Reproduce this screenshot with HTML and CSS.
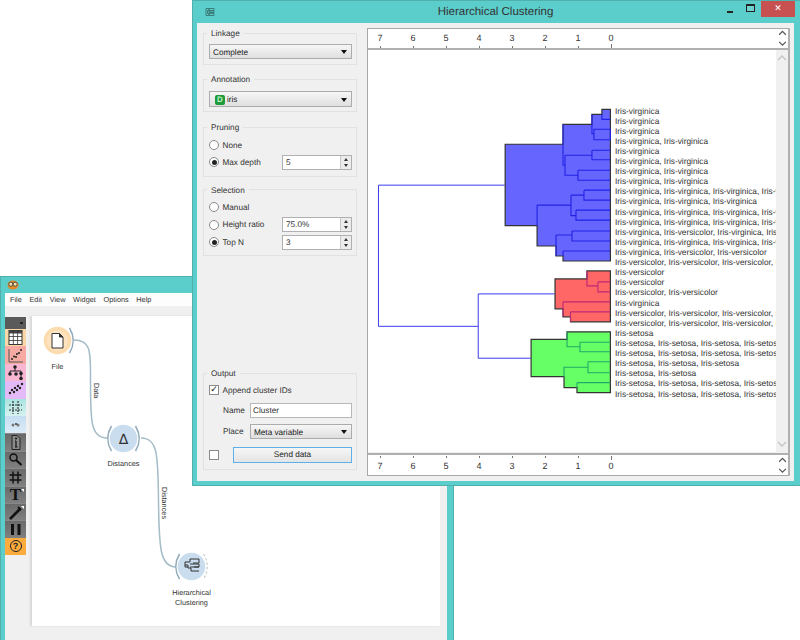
FILE: index.html
```html
<!DOCTYPE html>
<html lang="en">
<head>
<meta charset="utf-8">
<title>Hierarchical Clustering</title>
<link rel="stylesheet" href="styles.css">
</head>
<body>
<div class="desktop">

  <section class="window back">
    <header class="back-title">
      <svg class="owl" viewBox="0 0 12 10"><ellipse cx="6" cy="5" rx="5.5" ry="4.5" fill="#e08a2c"/><circle cx="3.8" cy="4.2" r="2" fill="#f6e2b0" stroke="#333" stroke-width=".8"/><circle cx="8.2" cy="4.2" r="2" fill="#f6e2b0" stroke="#333" stroke-width=".8"/></svg>
    </header>
    <nav class="menu"><span>File</span><span>Edit</span><span>View</span><span>Widget</span><span>Options</span><span>Help</span></nav>
    <div class="back-body">
      <div class="toolbox">
        <div class="tool tool-head"><i></i></div>
        <div class="tool c-orange"><svg viewBox="0 0 21 17"><rect x="4" y="1.5" width="13" height="14" fill="#fff" stroke="#333"/><rect x="4" y="1.5" width="13" height="3" fill="#444"/><path d="M8.3 1.5v14M12.6 1.5v14M4 7.5h13M4 11.5h13" stroke="#333" stroke-width=".8"/></svg></div>
        <div class="tool c-red"><svg viewBox="0 0 21 17"><path d="M4 2v13h14" fill="none" stroke="#555"/><g fill="#222"><circle cx="7" cy="12" r="1"/><circle cx="9" cy="9.500" r="1"/><circle cx="11" cy="10" r="1"/><circle cx="12" cy="7" r="1"/><circle cx="14" cy="6" r="1"/><circle cx="16" cy="3" r="1"/></g></svg></div>
        <div class="tool c-pink"><svg viewBox="0 0 21 17"><path d="M10 3v4M5 10V7h11v3M16 10v4" fill="none" stroke="#222"/><g fill="#222"><circle cx="10" cy="3" r="1.800"/><circle cx="5" cy="10" r="1.800"/><circle cx="11" cy="10" r="1.800"/><circle cx="16" cy="9.500" r="1.800"/><circle cx="16" cy="14.500" r="1.800"/></g></svg></div>
        <div class="tool c-purple"><svg viewBox="0 0 21 17"><g fill="#222"><circle cx="5" cy="12" r="1.200"/><circle cx="7" cy="9" r="1.200"/><circle cx="9" cy="11" r="1.200"/><circle cx="10" cy="7" r="1.200"/><circle cx="12" cy="9" r="1.200"/><circle cx="13" cy="5" r="1.200"/><circle cx="15" cy="7" r="1.200"/><circle cx="17" cy="3" r="1.200"/></g></svg></div>
        <div class="tool c-cyan"><svg viewBox="0 0 21 17"><path d="M8 2v13M13 2v13M4 6h13M4 11h13" stroke="#333" stroke-width="1.200" stroke-dasharray="2 1"/></svg></div>
        <div class="tool c-blue"><svg viewBox="0 0 21 17"><circle cx="8" cy="9" r="1.500" fill="#777"/><circle cx="13" cy="9" r="1.500" fill="#777"/><circle cx="11" cy="8" r="1" fill="#333"/></svg></div>
        <div class="tool c-gray"><svg viewBox="0 0 21 17"><path d="M7 1.500h5l3 3v11H7z" fill="#8a8a8a" stroke="#222"/><path d="M11 7v6M10 7h1M10 13h2.500" stroke="#111" stroke-width="1.200" fill="none"/><circle cx="11" cy="4.500" r="1" fill="#111"/></svg></div>
        <div class="tool c-gray"><svg viewBox="0 0 21 17"><circle cx="8.500" cy="6.500" r="3.500" fill="none" stroke="#111" stroke-width="1.500"/><path d="M11 9l5.500 5" stroke="#111" stroke-width="2.200"/></svg></div>
        <div class="tool c-gray"><svg viewBox="0 0 21 17"><path d="M8 2.500v12M13 2.500v12M4.500 6h12M4.500 11h12" stroke="#111" stroke-width="1.500"/></svg></div>
        <div class="tool c-gray"><span class="glyph-t">T</span><b class="corner"></b></div>
        <div class="tool c-gray"><svg viewBox="0 0 21 17"><path d="M5 15L15 5" stroke="#111" stroke-width="2.600"/><path d="M13 3l3 3" stroke="#111" stroke-width="2"/></svg><b class="corner"></b></div>
        <div class="tool c-gray"><svg viewBox="0 0 21 17"><path d="M7.500 3v11M14 3v11" stroke="#111" stroke-width="3"/></svg></div>
        <div class="tool c-help"><span class="glyph-q">?</span></div>
      </div>
      <svg class="canvas" viewBox="32 316 408 310">
        <g fill="none" stroke="#a3bcc8" stroke-width="1.500">
          <path d="M74 340C91 340 90.500 352 90.500 376C90.500 420 90 438 107 438"/>
          <path d="M141 438C158 438 158 456 158.500 500C159 548 160 567 176 567"/>
        </g>
        <text class="node-text" transform="translate(94 383) rotate(90)">Data</text>
        <text class="node-text" transform="translate(162 487) rotate(90)">Distances</text>

        <circle cx="57.500" cy="340.500" r="13.800" fill="#fcdcae"/>
        <circle cx="57.500" cy="340.500" r="10.500" fill="#fde3bf"/>
        <path d="M69.500 328Q77 340.500 69.500 353" fill="none" stroke="#90aaba" stroke-width="1.500"/>
        <path d="M52 333.500h7.500l3.500 3.500v11H52z" fill="#fff" stroke="#333"/>
        <path d="M59.500 333.500v3.500h3.500" fill="#333" stroke="#333"/>
        <text class="node-text" x="57.500" y="369" text-anchor="middle">File</text>

        <circle cx="123.500" cy="438.500" r="13.800" fill="#c9ddee"/>
        <path d="M111.500 426Q104 438.500 111.500 451M135.500 426Q143 438.500 135.500 451" fill="none" stroke="#90aaba" stroke-width="1.500"/>
        <text class="delta" x="123.500" y="443.500" text-anchor="middle">Δ</text>
        <text class="node-text" x="123.500" y="466" text-anchor="middle">Distances</text>

        <circle cx="191.500" cy="566.500" r="13.800" fill="#c9ddee"/>
        <path d="M179.500 554Q172 566.500 179.500 579" fill="none" stroke="#90aaba" stroke-width="1.500"/>
        <path d="M203.500 554Q211 566.500 203.500 579" fill="none" stroke="#c4c8cc" stroke-width="1.200" stroke-dasharray="2.500 2"/>
        <path d="M187 562h3v-3h9v4h-6M187 562h-2v5h3M185 565h3v3h3v3h8M190 564h9v3h-5M190 567h9" fill="none" stroke="#333"/>
        <text class="node-text" x="191.500" y="595" text-anchor="middle">Hierarchical</text>
        <text class="node-text" x="191.500" y="605" text-anchor="middle">Clustering</text>
      </svg>
    </div>
  </section>

  <section class="window front">
    <header class="front-title">
      <svg class="title-icon" viewBox="0 0 10 10"><path d="M1 1.500h3v2H2.500v3H4v2H1zM4 1.500h5v2H4zM4 4h5v1.500H4zM4 6.500h5v2H4z" fill="none" stroke="#3b7f7c"/></svg>
      <h1>Hierarchical Clustering</h1>
      <div class="controls">
        <span class="ctl-min"></span>
        <span class="ctl-max"></span>
        <span class="ctl-close">✕</span>
      </div>
    </header>
    <div class="front-body">
      <aside class="panel">
        <fieldset class="group g-linkage">
          <legend>Linkage</legend>
          <div class="combo"><span>Complete</span><i></i></div>
        </fieldset>
        <fieldset class="group g-annotation">
          <legend>Annotation</legend>
          <div class="combo combo-tall"><b class="disc">D</b><span>iris</span><i></i></div>
        </fieldset>
        <fieldset class="group g-pruning">
          <legend>Pruning</legend>
          <div class="rows">
            <div class="row"><span class="radio"></span><label>None</label></div>
            <div class="row"><span class="radio on"></span><label>Max depth</label><div class="spin"><span>5</span><i></i></div></div>
          </div>
        </fieldset>
        <fieldset class="group g-selection">
          <legend>Selection</legend>
          <div class="rows rows-wide">
            <div class="row"><span class="radio"></span><label>Manual</label></div>
            <div class="row"><span class="radio"></span><label>Height ratio</label><div class="spin"><span>75.0%</span><i></i></div></div>
            <div class="row"><span class="radio on"></span><label>Top N</label><div class="spin"><span>3</span><i></i></div></div>
          </div>
        </fieldset>
        <div class="spacer"></div>
        <fieldset class="group g-output">
          <legend>Output</legend>
          <div class="output-rows">
            <div class="row"><span class="check on">✓</span><label>Append cluster IDs</label></div>
            <div class="row field"><label>Name</label><div class="input">Cluster</div></div>
            <div class="row field"><label>Place</label><div class="combo"><span>Meta variable</span><i></i></div></div>
            <div class="row send"><span class="check"></span><button class="btn">Send data</button></div>
          </div>
        </fieldset>
      </aside>

      <main class="plot">
        <div class="axis axis-top">
          <svg class="axis-svg" viewBox="368 29 408 19">
            <g class="axis-nums" text-anchor="middle"><text x="380" y="41">7</text><text x="413" y="41">6</text><text x="446" y="41">5</text><text x="479" y="41">4</text><text x="512" y="41">3</text><text x="545" y="41">2</text><text x="578" y="41">1</text><text x="611" y="41">0</text></g>
            <path d="M380.500 46v2M413.500 46v2M446.500 46v2M479.500 46v2M512.500 46v2M545.500 46v2M578.500 46v2M611.500 44v4" stroke="#777"/>
          </svg>
          <div class="chev"><svg viewBox="0 0 11 20"><path d="M2 6l3.500-3.500L9 6M2 13.500l3.500 3.500L9 13.500" fill="none" stroke="#555" stroke-width="1.300"/></svg></div>
        </div>
        <div class="view">
          <svg class="dendro" viewBox="368 50 247 403" preserveAspectRatio="xMinYMin meet">
            <g fill="none" stroke="#3a3af0">
              <path d="M478.500 327H378.500V185.500H505"/>
              <path d="M555 294.500H478.500V359H531"/>
            </g>
            <path d="M505.500 144.500H563.500V124.500H592.500V114.500H602.500V109.500H611V261.500H563.500V256.500H556.500V246.500H537.500V226H505.500Z" fill="#6666ff" stroke="#333" stroke-width="1.200"/>
            <g fill="none" stroke="#2222e6" stroke-width="1.100">
              <path d="M602.500 114.500V119.500H611M592.500 114.500V134H594.500M594.500 129.500H611V140H594.500ZM563.500 124.500V165.500H565.500M565.500 155.500V175.500H578.500M565.500 155.500H592.500M592.500 150.500H611M592.500 150.500V160H611M578.500 170.500H611M578.500 170.500V180.500H611"/>
              <path d="M537.500 205.500H571.500M571.500 195.500V216H576.500M571.500 195.500H584.500M584.500 190.500V200.500H611M584.500 190.500H611M576.500 210.500V220.500H611M576.500 210.500H611M556.500 235.500V256.500M556.500 235.500H572.500M572.500 231.500V241.500H611M572.500 231.500H611M563.500 251.500V256.500M563.500 251.500H611"/>
              <path d="M537.500 205.500V226"/>
            </g>
            <path d="M555.500 279.500H587.500V271.500H611V322.500H571V317.500H563.500V309.500H555.500Z" fill="#ff6666" stroke="#333" stroke-width="1.200"/>
            <path d="M587.500 271.500V286.500H598.500M598.500 282.500V292.500H611M598.500 282.500H611M563.500 302.500V317.500M563.500 302.500H611M571 312.500V322.500M571 312.500H611" fill="none" stroke="#c02878" stroke-width="1.100"/>
            <path d="M531.500 340H567.500V332.500H611V393.500H577.500V388.500H564.500V377.500H531.500Z" fill="#66ff66" stroke="#333" stroke-width="1.200"/>
            <path d="M567.500 332.500V347.500H580.500M580.500 343V352.500H611M580.500 343H611M564.500 377.500V368H588.500M588.500 362.500V373.500H611M588.500 362.500H611M577.500 383.500V388.500M577.500 383.500H611" fill="none" stroke="#22a868" stroke-width="1.100"/>
          </svg>
          <ul class="labels">
            <li>Iris-virginica</li>
            <li>Iris-virginica</li>
            <li>Iris-virginica</li>
            <li>Iris-virginica, Iris-virginica</li>
            <li>Iris-virginica</li>
            <li>Iris-virginica, Iris-virginica</li>
            <li>Iris-virginica, Iris-virginica</li>
            <li>Iris-virginica, Iris-virginica</li>
            <li>Iris-virginica, Iris-virginica, Iris-virginica, Iris-virginica</li>
            <li>Iris-virginica, Iris-virginica, Iris-virginica</li>
            <li>Iris-virginica, Iris-virginica, Iris-virginica, Iris-virginica</li>
            <li>Iris-virginica, Iris-virginica, Iris-virginica, Iris-virginica</li>
            <li>Iris-virginica, Iris-versicolor, Iris-virginica, Iris-virginica</li>
            <li>Iris-virginica, Iris-virginica, Iris-virginica, Iris-virginica</li>
            <li>Iris-virginica, Iris-versicolor, Iris-versicolor</li>
            <li>Iris-versicolor, Iris-versicolor, Iris-versicolor, Iris-versicolor</li>
            <li>Iris-versicolor</li>
            <li>Iris-versicolor</li>
            <li>Iris-versicolor, Iris-versicolor</li>
            <li>Iris-virginica</li>
            <li>Iris-versicolor, Iris-versicolor, Iris-versicolor, Iris-versicolor</li>
            <li>Iris-versicolor, Iris-versicolor, Iris-versicolor, Iris-versicolor</li>
            <li>Iris-setosa</li>
            <li>Iris-setosa, Iris-setosa, Iris-setosa, Iris-setosa, Iris-setosa</li>
            <li>Iris-setosa, Iris-setosa, Iris-setosa, Iris-setosa, Iris-setosa</li>
            <li>Iris-setosa, Iris-setosa, Iris-setosa</li>
            <li>Iris-setosa, Iris-setosa</li>
            <li>Iris-setosa, Iris-setosa, Iris-setosa, Iris-setosa, Iris-setosa</li>
            <li>Iris-setosa, Iris-setosa, Iris-setosa, Iris-setosa, Iris-setosa</li>
          </ul>
          <div class="vscroll">
            <svg viewBox="0 0 12 10"><path d="M2 7l4-4 4 4" fill="none" stroke="#c4c4c4" stroke-width="1.300"/></svg>
            <svg viewBox="0 0 12 10"><path d="M2 3l4 4 4-4" fill="none" stroke="#c4c4c4" stroke-width="1.300"/></svg>
          </div>
        </div>
        <div class="axis axis-bottom">
          <svg class="axis-svg" viewBox="368 456 408 18">
            <path d="M380.500 456v2M413.500 456v2M446.500 456v2M479.500 456v2M512.500 456v2M545.500 456v2M578.500 456v2M611.500 456v4" stroke="#777"/>
            <g class="axis-nums" text-anchor="middle"><text x="380" y="469">7</text><text x="413" y="469">6</text><text x="446" y="469">5</text><text x="479" y="469">4</text><text x="512" y="469">3</text><text x="545" y="469">2</text><text x="578" y="469">1</text><text x="611" y="469">0</text></g>
          </svg>
          <div class="chev"><svg viewBox="0 0 11 20"><path d="M2 6l3.500-3.500L9 6M2 13.500l3.500 3.500L9 13.500" fill="none" stroke="#555" stroke-width="1.300"/></svg></div>
        </div>
      </main>
    </div>
  </section>

</div>
</body>
</html>
```

FILE: styles.css
```css
* { box-sizing: border-box; }
html, body { margin: 0; padding: 0; background: #fff; }
body { font-family: "Liberation Sans", Arial, sans-serif; font-size: 8.2px; color: #333; text-rendering: geometricPrecision; }
.desktop { position: relative; width: 800px; height: 640px; overflow: hidden; }

.window { position: absolute; background: #5bcdca; border: 1px solid #4fb0ae; display: flex; flex-direction: column; }

/* back window */
.back { left: 0; top: 276px; width: 454px; height: 370px; padding: 0 6px 0 4px; }
.back-title { height: 16px; flex: none; display: flex; align-items: center; padding-left: 1px; }
.owl { width: 12px; height: 10px; margin-left: 1px; }
.menu { height: 13px; flex: none; background: #fdfdfd; display: flex; gap: 7.7px; padding-left: 5px; font-size: 7.3px; line-height: 13px; }
.back-body { flex: 1; display: flex; background: #f0f0f0; padding-top: 10px; height: 334px; }
.toolbox { width: 21px; flex: none; display: flex; flex-direction: column; margin-top: 1px; }
.tool { height: 17.4px; flex: none; position: relative; display: flex; align-items: center; justify-content: center; }
.tool svg { width: 21px; height: 17px; display: block; }
.tool-head { height: 12px; background: #5a5a5a; }
.tool-head i { position: absolute; right: 3px; top: 5px; width: 3px; height: 2px; background: #222; }
.c-orange { background: #f9d7a6; }
.c-red { background: #f6aaa2; }
.c-pink { background: #f8b6d2; }
.c-purple { background: #e3b9f7; }
.c-cyan { background: linear-gradient(#a8e4e0, #d6f2f0); }
.c-blue { background: linear-gradient(#c4def2, #dcebf7); }
.c-gray { background: linear-gradient(#6a6a6a, #808080); border-top: 1px solid #888; }
.c-help { background: #fdab3d; }
.glyph-t { font: bold 17px/17px "Liberation Serif", serif; color: #111; }
.glyph-q { width: 12px; height: 12px; border: 1.500px solid #222; border-radius: 50%; font: bold 9px/10px "Liberation Sans", sans-serif; color: #222; text-align: center; }
.corner { position: absolute; right: 2px; top: 2px; width: 0; height: 0; border-left: 3px solid transparent; border-top: 3px solid #fff; }
.canvas { width: 408px; height: 310px; margin-left: 6px; flex: none; background: #fff; box-shadow: -2px 0 2px #d8d8d8; }
.node-text { font: 7.3px "Liberation Sans", sans-serif; fill: #333; }
.delta { font: 14px "DejaVu Sans", sans-serif; fill: #333; }

/* front window */
.front { left: 192px; top: 0; width: 609px; height: 486px; padding: 0 6px 4px 4px; }
.front-title { height: 22px; flex: none; display: flex; align-items: center; position: relative; }
.title-icon { width: 10px; height: 10px; margin-left: 8px; }
.front-title h1 { position: absolute; left: 0; right: 0; top: 4px; margin: 0; font: 11.5px/15px "Liberation Sans", sans-serif; color: #333; text-align: center; }
.controls { position: absolute; right: -1px; top: 0; display: flex; align-items: center; }
.ctl-min { width: 6px; height: 2px; background: #222; margin: 5px 13px 0 0; }
.ctl-max { width: 9px; height: 8px; border: 1.500px solid #222; border-top-width: 2.500px; background: #6fd2cf; margin: -2px 6px 0 0; }
.ctl-close { width: 34px; height: 16px; background: #c75050; color: #fff; font: 9px/16px "DejaVu Sans", sans-serif; text-align: center; }
.front-body { flex: 1; display: flex; background: #f0f0f0; min-height: 0; }

/* control panel */
.panel { width: 170px; flex: none; padding: 4px 10px 11px 6px; display: flex; flex-direction: column; }
.spacer { flex: 1; }
.group { margin: 0; padding: 0 4px 0 5px; border: 1px solid #e1e1e1; min-width: 0; }
.group legend { padding: 0 4px; margin-left: -2px; font-size: 8.2px; line-height: 12px; color: #333; position: relative; top: 1px; }
.g-linkage { padding-top: 5px; padding-bottom: 5px; }
.g-annotation { margin-top: 8px; padding-top: 6px; padding-bottom: 4px; }
.g-pruning { margin-top: 9px; padding-top: 4.500px; padding-bottom: 6px; }
.g-selection { margin-top: 7px; padding-top: 4px; padding-bottom: 5px; }
.g-output { padding-top: 4px; padding-bottom: 6px; }

.combo { height: 15px; display: flex; align-items: center; padding: 1px 4px 0 3px; border: 1px solid #acacac; background: linear-gradient(#f6f6f6, #dfdfdf); color: #222; position: relative; width: 100%; }
.combo-tall { height: 16px; padding-left: 5px; }
.combo span { flex: 1; }
.combo i { width: 0; height: 0; border-left: 3.500px solid transparent; border-right: 3.500px solid transparent; border-top: 4px solid #111; }
.disc { width: 10px; height: 10px; border-radius: 2px; background: #1d9a3a; color: #bff0c8; font: bold 8px/10px "Liberation Sans", sans-serif; text-align: center; margin-right: 2px; flex: none; }

.rows { display: flex; flex-direction: column; gap: 2px; }
.rows-wide { gap: 2.500px; }
.row { height: 15px; display: flex; align-items: center; }
.radio { width: 10px; height: 10px; border-radius: 50%; border: 1px solid #8a8a8a; background: #fff; flex: none; margin-right: 3.500px; position: relative; }
.radio.on::after { content: ""; position: absolute; left: 1.500px; top: 1.500px; width: 5px; height: 5px; border-radius: 50%; background: #222; }
.spin { width: 70px; height: 15px; margin-left: auto; border: 1px solid #b0b0b0; background: #fff; display: flex; align-items: center; padding-left: 3px; position: relative; }
.spin span { flex: 1; }
.spin i { width: 11px; height: 13px; background: #ececec; border-left: 1px solid #c8c8c8; position: relative; }
.spin i::before, .spin i::after { content: ""; position: absolute; left: 3px; width: 0; height: 0; border-left: 2.500px solid transparent; border-right: 2.500px solid transparent; }
.spin i::before { top: 2px; border-bottom: 3px solid #333; }
.spin i::after { bottom: 2px; border-top: 3px solid #333; }

.output-rows { display: flex; flex-direction: column; }
.output-rows > .row:first-child { height: 14px; }
.check { width: 10px; height: 10px; border: 1px solid #8a8a8a; background: #fff; flex: none; margin-right: 3.500px; font: bold 9px/8px "DejaVu Sans", sans-serif; color: #111; text-align: center; overflow: hidden; }
.field { margin-top: 6px; padding-left: 14px; }
.field label { width: 27px; flex: none; }
.field:nth-child(2) { height: 15px; }
.field:nth-child(3) { margin-top: 6px; }
.input { flex: 1; height: 15px; border: 1px solid #b8b8b8; background: #fff; line-height: 14px; padding-left: 2px; }
.send { height: 16px; margin-top: 8px; }
.send .check { margin-right: 14px; }
.btn { flex: none; width: 119px; height: 16px; border: 1px solid #5fb0ea; background: linear-gradient(#f6f6f6, #e4e4e4); font: 8.2px/14px "Liberation Sans", sans-serif; color: #222; padding: 0; text-rendering: geometricPrecision; }

/* plot */
.plot { flex: 1; min-width: 0; margin: 5px 4px 5px 0; display: flex; flex-direction: column; border-left: 1px solid #a8a8a8; border-right: 2px solid #b0b0b0; }
.axis { display: flex; background: #fff; flex: none; align-items: stretch; }
.axis-top { height: 22px; border-top: 1px solid #a8a8a8; border-bottom: 2px solid #b0b0b0; }
.axis-bottom { height: 23px; border-top: 2px solid #b0b0b0; border-bottom: 1px solid #a8a8a8; margin-top: 1px; }
.axis-svg { width: 408px; flex: none; display: block; height: 100%; }
.axis-nums { font: 9px "Liberation Sans", sans-serif; fill: #333; }
.chev { flex: 1; display: flex; align-items: center; justify-content: center; }
.chev svg { width: 11px; height: 19px; }
.view { flex: 1; min-height: 0; display: flex; background: #fff; }
.dendro { width: 247px; flex: none; display: block; height: 100%; }
.labels { list-style: none; margin: 0; padding: 55.500px 0 0 0; width: 161px; flex: none; overflow: hidden; white-space: nowrap; }
.labels li { height: 10.120px; line-height: 10.120px; font-size: 8.3px; color: #333; }
.vscroll { flex: 1; background: #f0f0f0; display: flex; flex-direction: column; justify-content: space-between; padding: 3px 0; }
.vscroll svg { width: 12px; height: 10px; display: block; }
```
